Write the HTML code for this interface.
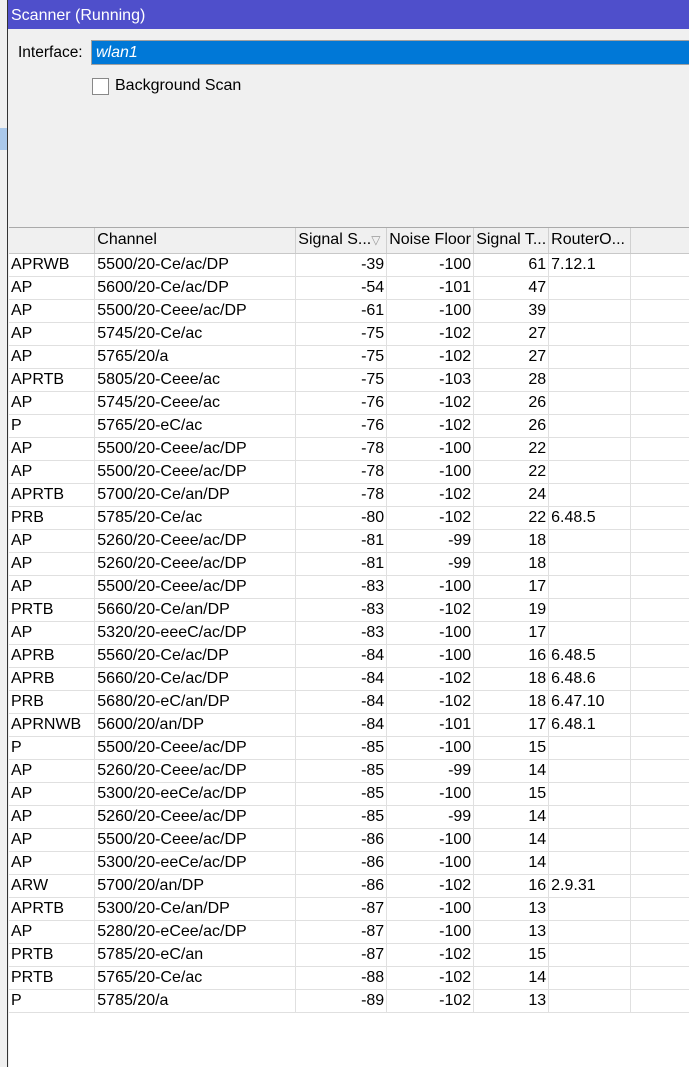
<!DOCTYPE html>
<html><head><style>
*{margin:0;padding:0;box-sizing:border-box}
body{width:689px;height:1067px;overflow:hidden;background:#f0f0f0;font-family:"Liberation Sans",Arial,sans-serif;position:relative}
.strip{position:absolute;left:0;top:0;width:7px;height:1067px;background:#f0f0f0}
.win{position:absolute;left:7px;top:0;width:682px;height:1067px;border-left:1px solid #333;background:#f0f0f0}
.title{position:absolute;left:0;top:0;width:682px;height:29px;background:#4f4fcb;color:#fff;font-size:16px;line-height:31px;padding-left:3px}
.lbl{position:absolute;left:10px;top:44px;font-size:15.5px;color:#000}
.inp{position:absolute;left:83px;top:40px;width:600px;height:25px;background:#0078d7;border:1px solid #a0a0a0;border-right:none;color:#fff;font-style:italic;font-size:16px;line-height:23px;padding-left:4px}
.cb{position:absolute;left:84px;top:78px;width:17px;height:17px;background:#fff;border:1px solid #888}
.cbl{position:absolute;left:107px;top:77px;font-size:16px}
.tbl{position:absolute;left:1px;top:227px;width:681px;height:840px;background:#fff;border-top:1px solid #aaa}
table{border-collapse:collapse;font-size:16px;table-layout:fixed}
td{height:23px;border-right:1px solid #e0e0e0;border-bottom:1px solid #e0e0e0;padding:0 2px;white-space:nowrap;overflow:hidden}
tr.h td{height:25px;background:#f0f0f0;border-right:1px solid #d0d0d0;border-bottom:1px solid #c8c8c8}
td.r{text-align:right}
</style></head><body>
<div class="strip"></div>
<div style="position:absolute;left:0;top:128px;width:7px;height:22px;background:#aac8ea"></div>
<div class="win">
<div class="title">Scanner (Running)</div>
<div class="lbl">Interface:</div>
<div class="inp">wlan1</div>
<div class="cb"></div>
<div class="cbl">Background Scan</div>
<div class="tbl">
<table>
<colgroup><col style="width:86px"><col style="width:202px"><col style="width:91px"><col style="width:87px"><col style="width:73px"><col style="width:82px"><col style="width:60px"></colgroup>
<tr class="h"><td></td><td>Channel</td><td>Signal S...<span style="color:#999;font-size:12px">▽</span></td><td>Noise Floor</td><td>Signal T...</td><td>RouterO...</td><td></td></tr>
<tr><td>APRWB</td><td>5500/20-Ce/ac/DP</td><td class="r">-39</td><td class="r">-100</td><td class="r">61</td><td>7.12.1</td><td></td></tr>
<tr><td>AP</td><td>5600/20-Ce/ac/DP</td><td class="r">-54</td><td class="r">-101</td><td class="r">47</td><td></td><td></td></tr>
<tr><td>AP</td><td>5500/20-Ceee/ac/DP</td><td class="r">-61</td><td class="r">-100</td><td class="r">39</td><td></td><td></td></tr>
<tr><td>AP</td><td>5745/20-Ce/ac</td><td class="r">-75</td><td class="r">-102</td><td class="r">27</td><td></td><td></td></tr>
<tr><td>AP</td><td>5765/20/a</td><td class="r">-75</td><td class="r">-102</td><td class="r">27</td><td></td><td></td></tr>
<tr><td>APRTB</td><td>5805/20-Ceee/ac</td><td class="r">-75</td><td class="r">-103</td><td class="r">28</td><td></td><td></td></tr>
<tr><td>AP</td><td>5745/20-Ceee/ac</td><td class="r">-76</td><td class="r">-102</td><td class="r">26</td><td></td><td></td></tr>
<tr><td>P</td><td>5765/20-eC/ac</td><td class="r">-76</td><td class="r">-102</td><td class="r">26</td><td></td><td></td></tr>
<tr><td>AP</td><td>5500/20-Ceee/ac/DP</td><td class="r">-78</td><td class="r">-100</td><td class="r">22</td><td></td><td></td></tr>
<tr><td>AP</td><td>5500/20-Ceee/ac/DP</td><td class="r">-78</td><td class="r">-100</td><td class="r">22</td><td></td><td></td></tr>
<tr><td>APRTB</td><td>5700/20-Ce/an/DP</td><td class="r">-78</td><td class="r">-102</td><td class="r">24</td><td></td><td></td></tr>
<tr><td>PRB</td><td>5785/20-Ce/ac</td><td class="r">-80</td><td class="r">-102</td><td class="r">22</td><td>6.48.5</td><td></td></tr>
<tr><td>AP</td><td>5260/20-Ceee/ac/DP</td><td class="r">-81</td><td class="r">-99</td><td class="r">18</td><td></td><td></td></tr>
<tr><td>AP</td><td>5260/20-Ceee/ac/DP</td><td class="r">-81</td><td class="r">-99</td><td class="r">18</td><td></td><td></td></tr>
<tr><td>AP</td><td>5500/20-Ceee/ac/DP</td><td class="r">-83</td><td class="r">-100</td><td class="r">17</td><td></td><td></td></tr>
<tr><td>PRTB</td><td>5660/20-Ce/an/DP</td><td class="r">-83</td><td class="r">-102</td><td class="r">19</td><td></td><td></td></tr>
<tr><td>AP</td><td>5320/20-eeeC/ac/DP</td><td class="r">-83</td><td class="r">-100</td><td class="r">17</td><td></td><td></td></tr>
<tr><td>APRB</td><td>5560/20-Ce/ac/DP</td><td class="r">-84</td><td class="r">-100</td><td class="r">16</td><td>6.48.5</td><td></td></tr>
<tr><td>APRB</td><td>5660/20-Ce/ac/DP</td><td class="r">-84</td><td class="r">-102</td><td class="r">18</td><td>6.48.6</td><td></td></tr>
<tr><td>PRB</td><td>5680/20-eC/an/DP</td><td class="r">-84</td><td class="r">-102</td><td class="r">18</td><td>6.47.10</td><td></td></tr>
<tr><td>APRNWB</td><td>5600/20/an/DP</td><td class="r">-84</td><td class="r">-101</td><td class="r">17</td><td>6.48.1</td><td></td></tr>
<tr><td>P</td><td>5500/20-Ceee/ac/DP</td><td class="r">-85</td><td class="r">-100</td><td class="r">15</td><td></td><td></td></tr>
<tr><td>AP</td><td>5260/20-Ceee/ac/DP</td><td class="r">-85</td><td class="r">-99</td><td class="r">14</td><td></td><td></td></tr>
<tr><td>AP</td><td>5300/20-eeCe/ac/DP</td><td class="r">-85</td><td class="r">-100</td><td class="r">15</td><td></td><td></td></tr>
<tr><td>AP</td><td>5260/20-Ceee/ac/DP</td><td class="r">-85</td><td class="r">-99</td><td class="r">14</td><td></td><td></td></tr>
<tr><td>AP</td><td>5500/20-Ceee/ac/DP</td><td class="r">-86</td><td class="r">-100</td><td class="r">14</td><td></td><td></td></tr>
<tr><td>AP</td><td>5300/20-eeCe/ac/DP</td><td class="r">-86</td><td class="r">-100</td><td class="r">14</td><td></td><td></td></tr>
<tr><td>ARW</td><td>5700/20/an/DP</td><td class="r">-86</td><td class="r">-102</td><td class="r">16</td><td>2.9.31</td><td></td></tr>
<tr><td>APRTB</td><td>5300/20-Ce/an/DP</td><td class="r">-87</td><td class="r">-100</td><td class="r">13</td><td></td><td></td></tr>
<tr><td>AP</td><td>5280/20-eCee/ac/DP</td><td class="r">-87</td><td class="r">-100</td><td class="r">13</td><td></td><td></td></tr>
<tr><td>PRTB</td><td>5785/20-eC/an</td><td class="r">-87</td><td class="r">-102</td><td class="r">15</td><td></td><td></td></tr>
<tr><td>PRTB</td><td>5765/20-Ce/ac</td><td class="r">-88</td><td class="r">-102</td><td class="r">14</td><td></td><td></td></tr>
<tr><td>P</td><td>5785/20/a</td><td class="r">-89</td><td class="r">-102</td><td class="r">13</td><td></td><td></td></tr>
</table>
</div>
</div>
</body></html>
